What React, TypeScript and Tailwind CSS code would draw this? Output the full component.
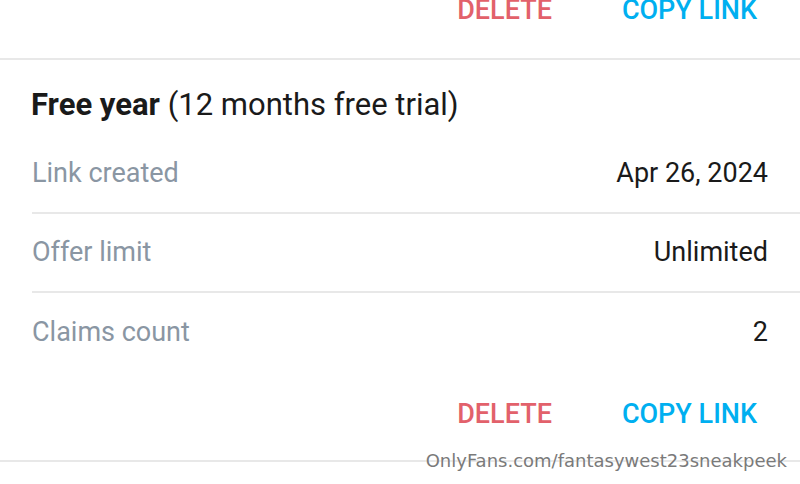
import React from "react";

function Actions({ className }: { className?: string }) {
  return (
    <div className={"flex justify-end gap-[70px] pr-[43px] text-[27px] leading-[20px] font-medium " + (className ?? "")}>
      <span className="text-[#e2616b]">DELETE</span>
      <span className="text-[#00aff0]">COPY LINK</span>
    </div>
  );
}

function Row({ label, value, border }: { label: string; value: string; border?: boolean }) {
  return (
    <div className={"flex items-center justify-between h-[79px] pr-[32px] " + (border ? "border-b-2 border-[#e8e8e8]" : "")}>
      <span className="text-[#8a96a3]">{label}</span>
      <span className="text-[#1a1a1a]">{value}</span>
    </div>
  );
}

export default function App() {
  return (
    <div className="relative w-[800px] h-[484px] bg-white overflow-hidden" style={{ fontFamily: "Roboto, 'Liberation Sans', sans-serif" }}>
      <div className="h-[58px]">
        <Actions />
      </div>
      <div className="border-t-2 border-[#e8e8e8]">
        <div className="pl-[31px] pt-[29px] text-[31px] leading-[32px] text-[#1a1a1a]">
          <span className="font-bold">Free year</span> (12 months free trial)
        </div>
        <div className="pl-[32px] mt-[14px] text-[27px]">
          <Row label="Link created" value="Apr 26, 2024" border />
          <Row label="Offer limit" value="Unlimited" border />
          <Row label="Claims count" value="2" />
        </div>
        <Actions className="mt-[32px]" />
        <div className="mt-[36px] border-t-2 border-[#e8e8e8]" />
      </div>
      <div
        className="absolute right-[13px] top-[449px] text-[18px] leading-[24px] text-[#7a7a7a]"
        style={{ fontFamily: "'DejaVu Sans', sans-serif", textShadow: "0 0 2px #fff" }}
      >
        OnlyFans.com/fantasywest23sneakpeek
      </div>
    </div>
  );
}
